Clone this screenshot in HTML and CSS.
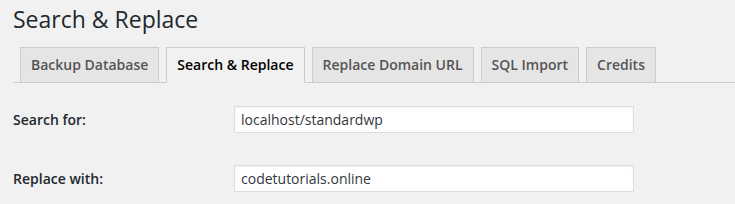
FILE: index.html
```html
<!DOCTYPE html>
<html>

<head>
    <title>Search &amp; Replace</title>

    <link rel="stylesheet" href="styles.css">

</head>

<body>
    <div class="wrap">
        <h1>Search &amp; Replace</h1>

        <nav class="nav-tab-wrapper">
            <a class="nav-tab">Backup Database</a>
            <a class="nav-tab nav-tab-active">Search &amp; Replace</a>
            <a class="nav-tab">Replace Domain URL</a>
            <a class="nav-tab">SQL Import</a>
            <a class="nav-tab">Credits</a>
        </nav>

        <form class="form-table">
            <div class="form-row">
                <label for="search">Search for:</label>
                <input id="search" type="text" value="localhost/standardwp">
            </div>
            <div class="form-row">
                <label for="replace">Replace with:</label>
                <input id="replace" type="text" value="codetutorials.online">
            </div>
        </form>
    </div>
</body>

</html>
```

FILE: styles.css
```css
body {
    margin: 0;
    background: #f1f1f1;
    color: #444;

    font-family: "Open Sans", "Liberation Sans", sans-serif;
    font-size: 14px;
}

.wrap {
    padding-left: 13px;
}

h1 {
    margin: 4px 0 0;

    font-size: 23px;
    font-weight: 400;
    line-height: 30px;
    color: #23282d;
}

.nav-tab-wrapper {
    display: flex;
    align-items: flex-end;

    padding-top: 13px;
    border-bottom: 1px solid #ccc;
}

.nav-tab {
    margin-left: 7px;
    padding: 5px 10px;

    background: #e5e5e5;
    border: 1px solid #ccc;
    border-bottom: none;

    font-size: 14px;
    font-weight: 600;
    line-height: 24px;
    color: #555;
    white-space: nowrap;
}

.nav-tab-active {
    margin-bottom: -1px;

    background: #f1f1f1;
    border-bottom: 1px solid #f1f1f1;

    color: #000;
}

.form-table {
    display: flex;
    flex-direction: column;
    gap: 32px;

    margin-top: 23px;
}

.form-row {
    display: flex;
    align-items: center;
}

.form-row label {
    width: 221px;

    font-weight: 600;
    line-height: 18px;
    color: #23282d;
}

.form-row input {
    box-sizing: border-box;
    width: 400px;
    height: 27px;

    margin: 0;
    padding: 0 6px;

    background: #fff;
    border: 1px solid #ddd;
    box-shadow: inset 0 1px 2px rgba(0, 0, 0, .07);
    outline: none;

    font-family: "Open Sans", "Liberation Sans", sans-serif;
    font-size: 14px;
    color: #32373c;
}
```
